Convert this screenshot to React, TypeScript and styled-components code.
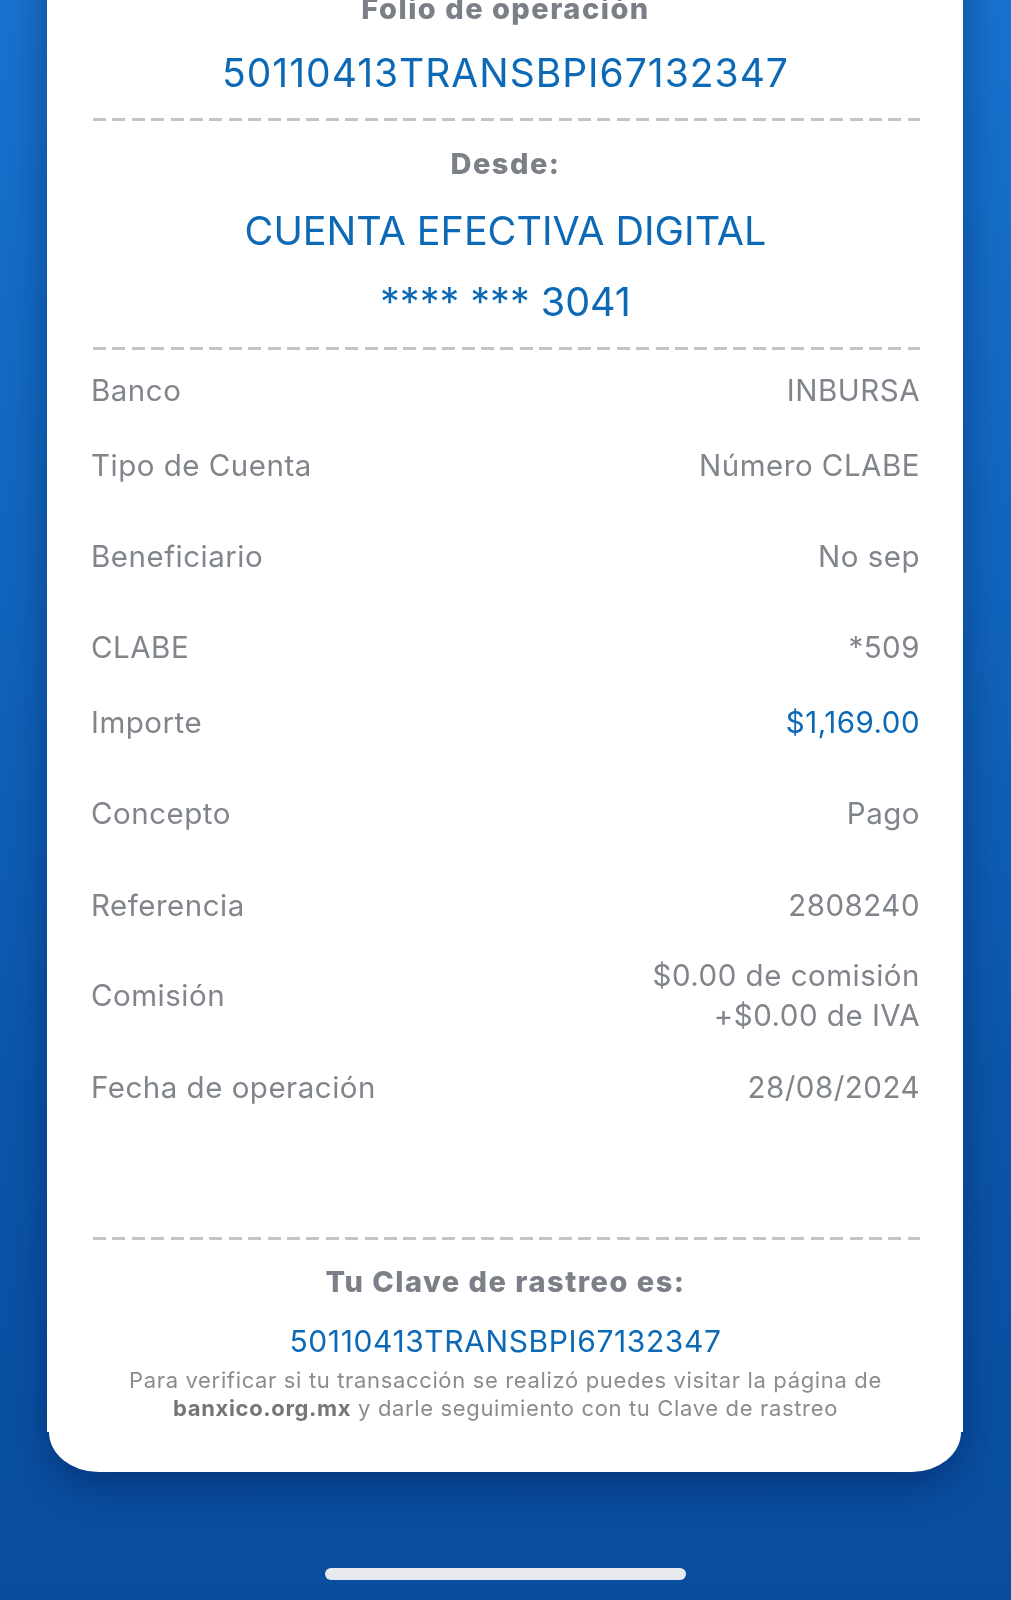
import React from "react";
import styled, { createGlobalStyle } from "styled-components";

const Global = createGlobalStyle`
  html, body { margin: 0; padding: 0; }
  body {
    font-family: Inter, "Noto Sans", "Liberation Sans", sans-serif;
    -webkit-font-smoothing: antialiased;
    overflow: hidden;
  }
`;

const Page = styled.div`
  width: 1011px;
  height: 1600px;
  overflow: hidden;
  display: flex;
  flex-direction: column;
  align-items: center;
  background: linear-gradient(180deg, #1873cf 0%, #1166bf 35%, #0b55aa 70%, #094d9f 100%);
`;

const Card = styled.div`
  width: 916px;
  margin-top: -58px;
  margin-left: -1px;
  display: flex;
  flex-direction: column;
  filter: drop-shadow(0 14px 22px rgba(0, 22, 70, 0.45));
`;

const Sheet = styled.div`
  background: #ffffff;
  padding: 49px 43px 10px 44px;
  display: flex;
  flex-direction: column;
  align-items: stretch;
`;

const SheetFoot = styled.div`
  background: #ffffff;
  height: 40px;
  margin: 0 2px;
  border-bottom-left-radius: 52px 42px;
  border-bottom-right-radius: 52px 42px;
`;

const Heading = styled.div<{ $mt?: number }>`
  margin-top: ${(p) => p.$mt ?? 0}px;
  text-align: center;
  font-weight: 800;
  font-size: 29px;
  line-height: 36px;
  letter-spacing: 1.5px;
  color: #7b7f87;
  white-space: nowrap;
`;

const BlueLine = styled.div<{ $size: number; $lh: number; $mt: number; $ls?: number }>`
  margin-top: ${(p) => p.$mt}px;
  text-align: center;
  font-size: ${(p) => p.$size}px;
  line-height: ${(p) => p.$lh}px;
  letter-spacing: ${(p) => p.$ls ?? 0}px;
  color: #0c69b6;
  white-space: nowrap;
`;

const Dashes = styled.div<{ $mt: number }>`
  margin: ${(p) => p.$mt}px 0 0 2px;
  height: 3px;
  background: repeating-linear-gradient(
    90deg,
    #c4c4c4 0 13px,
    transparent 13px 19.4px
  );
`;

const Row = styled.div<{ $mt: number }>`
  margin-top: ${(p) => p.$mt}px;
  display: flex;
  justify-content: space-between;
  align-items: center;
  font-size: 29.5px;
  line-height: 40px;
  letter-spacing: 0.5px;
  color: #80858c;
`;

const Label = styled.span``;

const Value = styled.span<{ $accent?: boolean }>`
  text-align: right;
  color: ${(p) => (p.$accent ? "#0c69b6" : "#80858c")};
`;

const Note = styled.p`
  margin: 7px 0 0;
  text-align: center;
  font-size: 22px;
  line-height: 28px;
  letter-spacing: 0.65px;
  color: #8c8c8c;
  white-space: nowrap;
`;

const Strong = styled.b`
  font-weight: 700;
  color: #767676;
`;

const HomeBar = styled.div`
  margin-top: 96px;
  width: 361px;
  height: 12px;
  border-radius: 6px;
  background: #e7e9ef;
`;

const rows: { label: string; value: React.ReactNode; mt: number; accent?: boolean }[] = [
  { label: "Banco", value: "INBURSA", mt: 20 },
  { label: "Tipo de Cuenta", value: "Número CLABE", mt: 35 },
  { label: "Beneficiario", value: "No sep", mt: 51 },
  { label: "CLABE", value: "*509", mt: 51 },
  { label: "Importe", value: "$1,169.00", mt: 35, accent: true },
  { label: "Concepto", value: "Pago", mt: 51 },
  { label: "Referencia", value: "2808240", mt: 52 },
  {
    label: "Comisión",
    value: (
      <>
        $0.00 de comisión
        <br />
        +$0.00 de IVA
      </>
    ),
    mt: 30,
  },
  { label: "Fecha de operación", value: "28/08/2024", mt: 32 },
];

export default function App() {
  return (
    <>
      <Global />
      <Page>
        <Card>
          <Sheet>
            <Heading>Folio de operación</Heading>
            <BlueLine $size={39} $lh={46} $mt={23} $ls={1}>
              50110413TRANSBPI67132347
            </BlueLine>
            <Dashes $mt={22} />
            <Heading $mt={25}>Desde:</Heading>
            <BlueLine $size={39.5} $lh={48} $mt={25}>
              CUENTA EFECTIVA DIGITAL
            </BlueLine>
            <BlueLine $size={39.5} $lh={48} $mt={23}>
              **** *** 3041
            </BlueLine>
            <Dashes $mt={21} />
            {rows.map((r) => (
              <Row key={r.label} $mt={r.mt}>
                <Label>{r.label}</Label>
                <Value $accent={r.accent}>{r.value}</Value>
              </Row>
            ))}
            <Dashes $mt={130} />
            <Heading $mt={24}>Tu Clave de rastreo es:</Heading>
            <BlueLine $size={30} $lh={36} $mt={23} $ls={0.6}>
              50110413TRANSBPI67132347
            </BlueLine>
            <Note>
              Para verificar si tu transacción se realizó puedes visitar la página de
              <br />
              <Strong>banxico.org.mx</Strong> y darle seguimiento con tu Clave de rastreo
            </Note>
          </Sheet>
          <SheetFoot />
        </Card>
        <HomeBar />
      </Page>
    </>
  );
}
